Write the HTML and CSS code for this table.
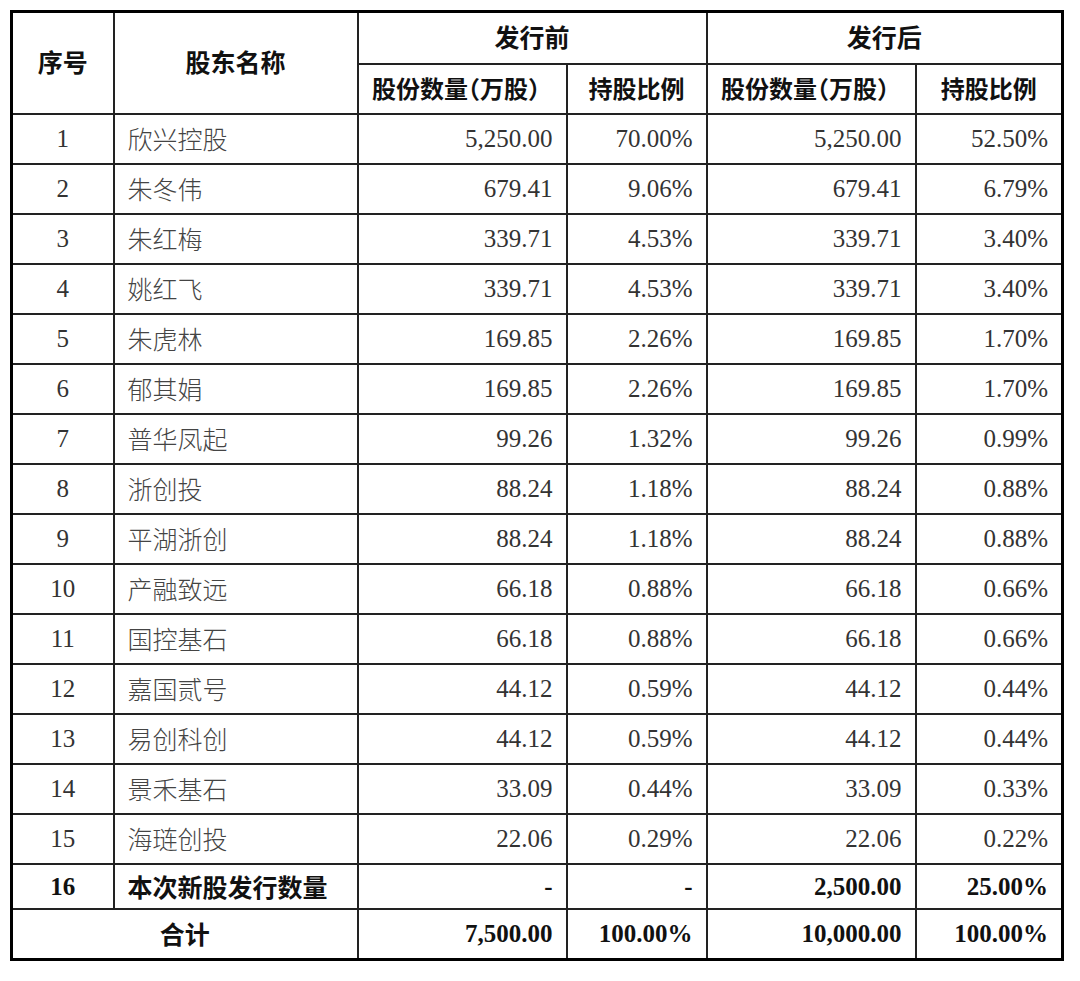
FILE: index.html
```html
<!DOCTYPE html>
<html lang="zh-CN">
<head>
<meta charset="utf-8">
<title>股东持股情况</title>
<link rel="stylesheet" href="styles.css">
</head>
<body>
<table class="sheet">
  <colgroup>
    <col class="c-no"><col class="c-name"><col class="c-qty"><col class="c-pct"><col class="c-qty2"><col class="c-pct2">
  </colgroup>
  <thead>
    <tr class="h1">
      <th rowspan="2">序号</th>
      <th rowspan="2" class="th-name">股东名称</th>
      <th colspan="2">发行前</th>
      <th colspan="2">发行后</th>
    </tr>
    <tr class="h2">
      <th>股份数量<span class="halt">（</span>万股）</th>
      <th>持股比例</th>
      <th>股份数量<span class="halt">（</span>万股）</th>
      <th>持股比例</th>
    </tr>
  </thead>
  <tbody>
    <tr><td class="no">1</td><td class="name">欣兴控股</td><td class="num">5,250.00</td><td class="num">70.00%</td><td class="num">5,250.00</td><td class="num">52.50%</td></tr>
    <tr><td class="no">2</td><td class="name">朱冬伟</td><td class="num">679.41</td><td class="num">9.06%</td><td class="num">679.41</td><td class="num">6.79%</td></tr>
    <tr><td class="no">3</td><td class="name">朱红梅</td><td class="num">339.71</td><td class="num">4.53%</td><td class="num">339.71</td><td class="num">3.40%</td></tr>
    <tr><td class="no">4</td><td class="name">姚红飞</td><td class="num">339.71</td><td class="num">4.53%</td><td class="num">339.71</td><td class="num">3.40%</td></tr>
    <tr><td class="no">5</td><td class="name">朱虎林</td><td class="num">169.85</td><td class="num">2.26%</td><td class="num">169.85</td><td class="num">1.70%</td></tr>
    <tr><td class="no">6</td><td class="name">郁其娟</td><td class="num">169.85</td><td class="num">2.26%</td><td class="num">169.85</td><td class="num">1.70%</td></tr>
    <tr><td class="no">7</td><td class="name">普华凤起</td><td class="num">99.26</td><td class="num">1.32%</td><td class="num">99.26</td><td class="num">0.99%</td></tr>
    <tr><td class="no">8</td><td class="name">浙创投</td><td class="num">88.24</td><td class="num">1.18%</td><td class="num">88.24</td><td class="num">0.88%</td></tr>
    <tr><td class="no">9</td><td class="name">平湖浙创</td><td class="num">88.24</td><td class="num">1.18%</td><td class="num">88.24</td><td class="num">0.88%</td></tr>
    <tr><td class="no">10</td><td class="name">产融致远</td><td class="num">66.18</td><td class="num">0.88%</td><td class="num">66.18</td><td class="num">0.66%</td></tr>
    <tr><td class="no">11</td><td class="name">国控基石</td><td class="num">66.18</td><td class="num">0.88%</td><td class="num">66.18</td><td class="num">0.66%</td></tr>
    <tr><td class="no">12</td><td class="name">嘉国贰号</td><td class="num">44.12</td><td class="num">0.59%</td><td class="num">44.12</td><td class="num">0.44%</td></tr>
    <tr><td class="no">13</td><td class="name">易创科创</td><td class="num">44.12</td><td class="num">0.59%</td><td class="num">44.12</td><td class="num">0.44%</td></tr>
    <tr><td class="no">14</td><td class="name">景禾基石</td><td class="num">33.09</td><td class="num">0.44%</td><td class="num">33.09</td><td class="num">0.33%</td></tr>
    <tr><td class="no">15</td><td class="name">海琏创投</td><td class="num">22.06</td><td class="num">0.29%</td><td class="num">22.06</td><td class="num">0.22%</td></tr>
    <tr class="bold new"><td class="no">16</td><td class="name">本次新股发行数量</td><td class="num">-</td><td class="num">-</td><td class="num">2,500.00</td><td class="num">25.00%</td></tr>
  </tbody>
  <tfoot>
    <tr class="bold total"><td colspan="2" class="label">合计</td><td class="num">7,500.00</td><td class="num">100.00%</td><td class="num">10,000.00</td><td class="num">100.00%</td></tr>
  </tfoot>
</table>
</body>
</html>
```

FILE: styles.css
```css
html, body {
  margin: 0;
  padding: 0;
  background: #ffffff;
}

body {
  padding: 10px 0 0 10px;
}

.sheet {
  border-collapse: collapse;
  border: 3px solid #000;
  width: 1051px;
  table-layout: fixed;
  font-family: "Liberation Serif", "Noto Sans CJK SC", serif;
  color: #333;
}

.c-no { width: 102px; }
.c-name { width: 244px; }
.c-qty { width: 209px; }
.c-pct { width: 140px; }
.c-qty2 { width: 209px; }
.c-pct2 { width: 147px; }

.sheet th,
.sheet td {
  border: 2px solid #222;
  padding: 0 13px;
  box-sizing: border-box;
  white-space: nowrap;
}

.sheet th {
  font-family: "Noto Sans CJK SC", sans-serif;
  font-weight: 700;
  font-size: 25px;
  color: #111;
  text-align: center;
  vertical-align: middle;
  padding-bottom: 3px;
}

.sheet thead .h2 th {
  font-size: 24px;
}

.halt {
  font-feature-settings: "halt";
}

.h1 { height: 52px; }
.h2 { height: 50px; }
.sheet tbody tr { height: 50px; }
.sheet tbody tr.new { height: 45px; }
.sheet tfoot tr { height: 51px; }

.sheet td {
  font-size: 25px;
  vertical-align: middle;
  line-height: 1;
}

.sheet td.no {
  text-align: center;
}

.sheet td.name {
  font-family: "Noto Sans CJK SC", sans-serif;
  font-weight: 300;
  color: #444;
  font-size: 25px;
  text-align: left;
}

.sheet td.num {
  text-align: right;
}

.sheet tr.bold td {
  font-weight: 700;
  color: #111;
}

.sheet tr.bold td.name,
.sheet td.label {
  font-family: "Noto Sans CJK SC", sans-serif;
  font-weight: 700;
  color: #111;
}

.sheet td.label {
  text-align: center;
}
```
